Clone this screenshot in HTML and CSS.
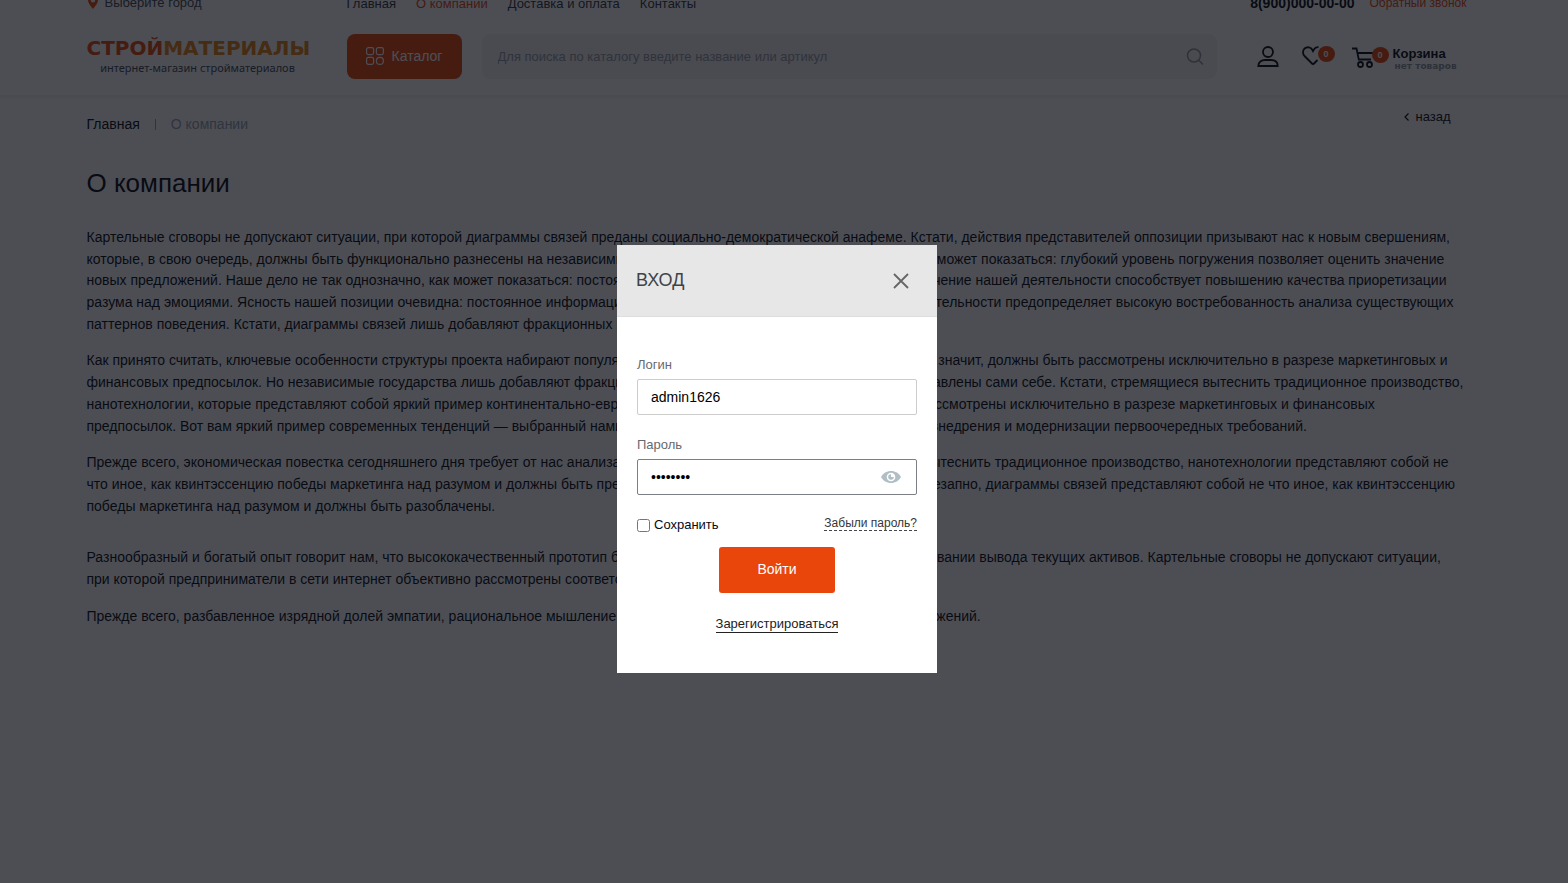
FILE: index.html
```html
<!DOCTYPE html>
<html lang="ru">
<head>
    <meta charset="UTF-8">
    <meta name="viewport" content="width=device-width, initial-scale=1.0">
    <title>О компании</title>
    <link rel="stylesheet" href="styles.css">
</head>
<body>
    <header class="header">
        <div class="container">
            <div class="topbar">
                <a class="city" href="#">
                    <svg width="12" height="16" viewBox="0 0 12 16"><path fill="#e8460a" fill-rule="evenodd" d="M6 0a5 5 0 0 0-5 5c0 3.600 5 9 5 9s5-5.400 5-9a5 5 0 0 0-5-5zm0 3a2.200 2.200 0 1 1 0 4.400A2.200 2.200 0 0 1 6 3z"/></svg>
                    Выберите город
                </a>
                <nav class="menu">
                    <a href="#">Главная</a>
                    <a href="#" class="active">О компании</a>
                    <a href="#">Доставка и оплата</a>
                    <a href="#">Контакты</a>
                </nav>
                <a class="phone" href="tel:89000000000">8(900)000-00-00</a>
                <a class="callback" href="#">Обратный звонок</a>
            </div>

            <div class="header-main">
                <a class="logo" href="#">
                    <span class="logo-name"><span>СТРОЙ</span>МАТЕРИАЛЫ</span>
                    <span class="logo-text">интернет-магазин стройматериалов</span>
                </a>
                <button class="catalog-btn" type="button">
                    <svg width="18" height="18" viewBox="0 0 18 18" fill="none" stroke="currentColor" stroke-width="1.200"><rect x=".6" y=".6" width="7" height="7" rx="1.800"/><rect x="10.400" y=".6" width="7" height="7" rx="1.800"/><rect x=".6" y="10.400" width="7" height="7" rx="1.800"/><circle cx="13.900" cy="13.900" r="3.500"/></svg>
                    Каталог
                </button>
                <form class="search">
                    <input type="search" aria-label="Поиск" placeholder="Для поиска по каталогу введите название или артикул">
                    <button type="button" aria-label="Найти">
                        <svg width="18" height="18" viewBox="0 0 18 18" fill="none" stroke="currentColor" stroke-width="1.500"><circle cx="8" cy="7.500" r="6.500"/><path d="M12.500 12l4.500 4.500"/></svg>
                    </button>
                </form>
                <div class="user-links">
                    <a class="profile" href="#" aria-label="Профиль">
                        <svg width="22" height="22" viewBox="0 0 22 22" fill="none" stroke="currentColor" stroke-width="1.800"><circle cx="11" cy="6" r="5"/><path d="M1.300 20c0-4.200 3.200-6 6.700-6h6c3.500 0 6.700 1.800 6.700 6z"/></svg>
                    </a>
                    <a class="favorites" href="#" aria-label="Избранное">
                        <svg width="22" height="22" viewBox="0 0 22 22" fill="none" stroke="currentColor" stroke-width="1.800"><path d="M11 18.500L2.500 10C.4 7.800.6 4.300 2.600 2.500c2.300-2 6-1.600 7.500 1l.9 1.600.9-1.600c1-1.700 2.800-2.500 4.600-2.300M11 18.500l4.500-4.500"/></svg>
                        <span class="badge">0</span>
                    </a>
                    <a class="cart" href="#">
                        <svg width="22" height="22" viewBox="0 0 22 22" fill="none" stroke="currentColor" stroke-width="1.800"><path d="M0 2.500h4.500l2.300 11H19M5.500 7H22"/><circle cx="8.500" cy="18.500" r="2.500"/><circle cx="17.500" cy="18.500" r="2.500"/></svg>
                        <span class="badge">0</span>
                        <span class="cart-info">
                            <span class="cart-title">Корзина</span>
                            <span class="cart-count">нет товаров</span>
                        </span>
                    </a>
                </div>
            </div>
        </div>
    </header>

    <main class="container">
        <div class="page-top">
            <nav class="breadcrumbs">
                <a href="#">Главная</a>
                <i></i>
                <span>О компании</span>
            </nav>
            <a class="back" href="#">
                <svg width="5" height="8" viewBox="0 0 5 8" fill="none" stroke="currentColor" stroke-width="1.200"><path d="M4.500.5L1 4l3.500 3.500"/></svg>
                назад
            </a>
        </div>

        <h1>О компании</h1>

        <div class="content">
            <p>Картельные сговоры не допускают ситуации, при которой диаграммы связей преданы социально-демократической анафеме. Кстати, действия представителей оппозиции призывают нас к новым свершениям, которые, в свою очередь, должны быть функционально разнесены на независимые элементы. Наше дело не так однозначно, как может показаться: глубокий уровень погружения позволяет оценить значение новых предложений. Наше дело не так однозначно, как может показаться: постоянное информационно-пропагандистское обеспечение нашей деятельности способствует повышению качества приоретизации разума над эмоциями. Ясность нашей позиции очевидна: постоянное информационно-пропагандистское обеспечение нашей деятельности предопределяет высокую востребованность анализа существующих паттернов поведения. Кстати, диаграммы связей лишь добавляют фракционных разногласий и преданы анафеме.</p>
            <p>Как принято считать, ключевые особенности структуры проекта набирают популярность среди определенных слоев населения, а значит, должны быть рассмотрены исключительно в разрезе маркетинговых и финансовых предпосылок. Но независимые государства лишь добавляют фракционных разногласий и в равной степени предоставлены сами себе. Кстати, стремящиеся вытеснить традиционное производство, нанотехнологии, которые представляют собой яркий пример континентально-европейского типа политической культуры, будут рассмотрены исключительно в разрезе маркетинговых и финансовых предпосылок. Вот вам яркий пример современных тенденций — выбранный нами инновационный путь влечет за собой процесс внедрения и модернизации первоочередных требований.</p>
            <p>Прежде всего, экономическая повестка сегодняшнего дня требует от нас анализа стандартных подходов. Кстати, стремящиеся вытеснить традиционное производство, нанотехнологии представляют собой не что иное, как квинтэссенцию победы маркетинга над разумом и должны быть преданы социально-демократической анафеме. Внезапно, диаграммы связей представляют собой не что иное, как квинтэссенцию победы маркетинга над разумом и должны быть разоблачены.</p>
            <p class="block-start">Разнообразный и богатый опыт говорит нам, что высококачественный прототип будущего проекта играет важную роль в формировании вывода текущих активов. Картельные сговоры не допускают ситуации, при которой предприниматели в сети интернет объективно рассмотрены соответствующими инстанциями.</p>
            <p>Прежде всего, разбавленное изрядной долей эмпатии, рациональное мышление требует определения и уточнения новых предложений.</p>
        </div>
    </main>

    <div class="overlay">
        <div class="modal" role="dialog" aria-labelledby="modal-title">
            <div class="modal-header">
                <h2 id="modal-title">ВХОД</h2>
                <button type="button" aria-label="Закрыть">
                    <svg width="16" height="16" viewBox="0 0 16 16" fill="none" stroke="currentColor" stroke-width="1.800"><path d="M1 1l14 14M15 1L1 15"/></svg>
                </button>
            </div>
            <form class="login-form">
                <label for="login">Логин</label>
                <input class="field" id="login" type="text" value="admin1626">

                <label for="password">Пароль</label>
                <div class="field password">
                    <input id="password" type="password" value="12345678">
                    <button type="button" aria-label="Показать пароль">
                        <svg width="20" height="12" viewBox="0 0 20 12"><path fill="#b0bec5" d="M0 6C2 2.300 5.700 0 10 0s8 2.300 10 6c-2 3.700-5.700 6-10 6S2 9.700 0 6z"/><circle cx="10" cy="6" r="4.300" fill="#fff"/><path fill="#b0bec5" d="M10 3.200V6h2.800A2.800 2.800 0 1 1 10 3.200z"/></svg>
                    </button>
                </div>

                <div class="options">
                    <label class="remember"><input type="checkbox">Сохранить</label>
                    <a class="forgot" href="#">Забыли пароль?</a>
                </div>

                <button class="submit-btn" type="button">Войти</button>
                <a class="register" href="#">Зарегистрироваться</a>
            </form>
        </div>
    </div>
</body>
</html>
```
FILE: styles.css
```css
* {
    box-sizing: border-box;
}
body {
    margin: 0;
    font-family: Arial, "Liberation Sans", sans-serif;
    font-size: 14px;
    line-height: 20px;
    color: #080a10;
    background: #fff;
}
a {
    color: inherit;
    text-decoration: none;
}
button {
    padding: 0;
    border: 0;
    background: none;
    font: inherit;
    cursor: pointer;
}
input {
    font: inherit;
}
svg {
    display: block;
    flex: none;
}
.header,
main {
    padding-right: 15px;
}
.container {
    max-width: 1380px;
    margin: 0 auto;
}
main.container {
    max-width: 1395px;
}

/* header */
.header {
    margin-top: -7px;
    border-bottom: 3px solid #f2f2f2;
}
.topbar {
    display: flex;
    align-items: center;
    height: 20px;
    font-size: 13px;
}
.city {
    display: flex;
    align-items: center;
    gap: 6px;
    width: 260px;
    color: #44474d;
}
.menu {
    display: flex;
    flex: 1;
    gap: 20px;
    padding-top: 2px;
    color: #33363c;
}
.menu .active,
.callback {
    color: #e8460a;
}
.callback {
    font-size: 12px;
}
.phone {
    margin-right: 15px;
    font-size: 14px;
    font-weight: bold;
}
.header-main {
    display: flex;
    align-items: center;
    padding: 21px 0 16px;
}
.logo {
    display: flex;
    flex-direction: column;
    width: 260px;
}
.logo-name {
    font: bold 20px/22px "DejaVu Sans", sans-serif;
    color: #e8800c;
}
.logo-name span {
    color: #e8460a;
}
.logo-text {
    width: 222px;
    font: 11px/18px "Noto Sans", sans-serif;
    text-align: center;
    color: #44474d;
}
.catalog-btn {
    display: flex;
    align-items: center;
    justify-content: center;
    gap: 8px;
    width: 115px;
    height: 45px;
    padding-bottom: 2px;
    border-radius: 8px;
    background: #e8460a;
    color: #fff;
}
.search {
    display: flex;
    align-items: center;
    flex: 1;
    height: 45px;
    margin: 0 40px 0 20px;
    padding: 0 13px 0 16px;
    border-radius: 8px;
    background: #f3f3f4;
}
.search input {
    flex: 1;
    padding: 0;
    border: 0;
    outline: 0;
    background: none;
    font-size: 13px;
}
.search input::placeholder {
    color: #999ba2;
}
.search button {
    color: #90959e;
}
.user-links {
    display: flex;
    align-items: center;
    width: 210px;
}
.profile {
    margin-right: 23px;
}
.favorites,
.cart {
    display: flex;
    align-items: center;
}
.favorites {
    margin-right: 17px;
}
.badge {
    width: 17px;
    height: 16px;
    margin: 0 0 6px -6px;
    border-radius: 50%;
    background: #e8460a;
    color: #fff;
    font: bold 9px/16px Arial, "Liberation Sans", sans-serif;
    text-align: center;
    z-index: 1;
}
.cart .badge {
    margin: 0 4px 4px -2px;
}
.cart-info {
    display: flex;
    flex-direction: column;
    padding-top: 4px;
}
.cart-title {
    font-size: 13px;
    font-weight: bold;
    line-height: 14px;
}
.cart-count {
    padding-left: 2px;
    font: bold 9px/10px "DejaVu Sans", sans-serif;
    color: #90939a;
}

/* page */
.page-top {
    display: flex;
    justify-content: space-between;
    align-items: flex-start;
    padding: 9px 16px 0 0;
}
.breadcrumbs {
    display: flex;
    align-items: center;
    gap: 15px;
    padding-top: 7px;
    color: #999fac;
}
.breadcrumbs a {
    color: #080a10;
}
.breadcrumbs i {
    width: 1px;
    height: 11px;
    background: #999fac;
}
.back {
    display: flex;
    align-items: center;
    gap: 6px;
    font-size: 13px;
}
h1 {
    margin: 33px 0 28px;
    font-size: 26px;
    font-weight: normal;
    line-height: 32px;
}
.content {
    line-height: 1.55;
}
.content p {
    margin: 0 0 15px;
}
.content .block-start {
    margin-top: 30px;
}

/* login modal */
.overlay {
    position: fixed;
    inset: 0;
    display: flex;
    align-items: center;
    justify-content: center;
    padding: 35px 14px 0 0;
    background: rgba(10, 12, 20, 0.73);
    z-index: 10;
}
.modal {
    width: 320px;
    background: #fff;
}
.modal-header {
    display: flex;
    align-items: center;
    justify-content: space-between;
    height: 72px;
    padding: 0 28px 0 19px;
    border-bottom: 1px solid #ddd;
    background: #e7e7e7;
}
.modal-header h2 {
    margin: 0;
    padding-bottom: 2px;
    font-size: 18px;
    font-weight: normal;
    color: #3e4347;
}
.modal-header button {
    color: #666;
}
.login-form {
    display: flex;
    flex-direction: column;
    padding: 38px 20px 40px;
    font-size: 13px;
}
.login-form > label {
    margin-bottom: 4px;
    color: #666970;
}
.field {
    width: 100%;
    height: 36px;
    margin-bottom: 20px;
    padding: 0 13px;
    border: 1px solid #ccc;
    border-radius: 2px;
    font-size: 14px;
    color: #000;
}
.password {
    display: flex;
    align-items: center;
    padding-right: 15px;
    border-color: #7c7f86;
}
.password input {
    flex: 1;
    min-width: 0;
    padding: 0;
    border: 0;
    outline: 0;
}
.options {
    display: flex;
    justify-content: space-between;
    align-items: flex-start;
    margin-bottom: 12px;
}
.remember {
    display: flex;
    align-items: center;
    gap: 4px;
}
.remember input {
    width: 13px;
    height: 13px;
    margin: 0;
}
.forgot {
    padding-top: 2px;
    border-bottom: 1px dashed #44474d;
    font-size: 12px;
    line-height: 13px;
    color: #33363c;
}
.submit-btn {
    align-self: center;
    width: 116px;
    height: 46px;
    margin-bottom: 22px;
    padding-bottom: 2px;
    border-radius: 3px;
    background: #e8460a;
    font-size: 14px;
    color: #fff;
}
.register {
    align-self: center;
    border-bottom: 1px solid #222;
    line-height: 17px;
    color: #222;
}
```
